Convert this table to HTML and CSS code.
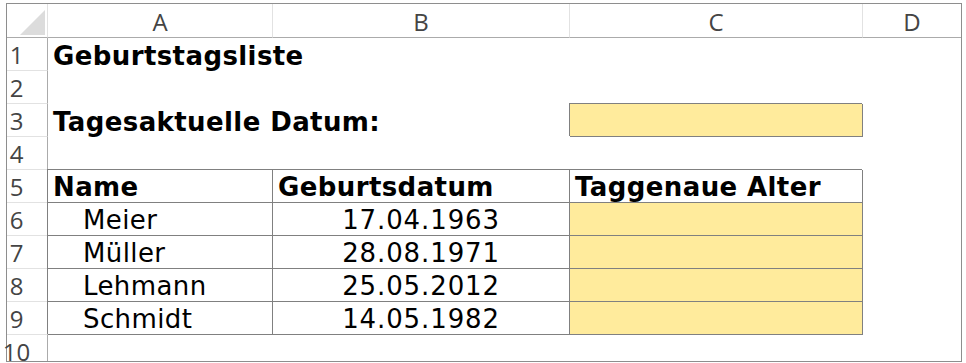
FILE: index.html
```html
<!DOCTYPE html>
<html lang="de">
  <head>
    <meta charset="UTF-8" />
    <meta name="viewport" content="width=device-width, initial-scale=1.0" />
    <title>Geburtstagsliste</title>
    <link rel="stylesheet" href="styles.css">
  </head>
  <body>
    <div class="sheet">
      <!-- column headers -->
      <div class="corner"><div class="corner-mark"></div></div>
      <div class="col-head">A</div>
      <div class="col-head">B</div>
      <div class="col-head">C</div>
      <div class="col-head">D</div>

      <div class="row-head"><span>1</span></div>
      <div class="cell bold">Geburtstagsliste</div>
      <div class="cell"></div>
      <div class="cell"></div>
      <div class="cell"></div>

      <div class="row-head"><span>2</span></div>
      <div class="cell"></div>
      <div class="cell"></div>
      <div class="cell"></div>
      <div class="cell"></div>

      <div class="row-head"><span>3</span></div>
      <div class="cell bold">Tagesaktuelle Datum:</div>
      <div class="cell"></div>
      <div class="cell boxed fill"></div>
      <div class="cell"></div>

      <div class="row-head"><span>4</span></div>
      <div class="cell"></div>
      <div class="cell"></div>
      <div class="cell"></div>
      <div class="cell"></div>

      <div class="row-head"><span>5</span></div>
      <div class="cell boxed bold">Name</div>
      <div class="cell boxed bold">Geburtsdatum</div>
      <div class="cell boxed bold">Taggenaue Alter</div>
      <div class="cell"></div>

      <div class="row-head"><span>6</span></div>
      <div class="cell boxed indent">Meier</div>
      <div class="cell boxed date">17.04.1963</div>
      <div class="cell boxed fill"></div>
      <div class="cell"></div>

      <div class="row-head"><span>7</span></div>
      <div class="cell boxed indent">Müller</div>
      <div class="cell boxed date">28.08.1971</div>
      <div class="cell boxed fill"></div>
      <div class="cell"></div>

      <div class="row-head"><span>8</span></div>
      <div class="cell boxed indent">Lehmann</div>
      <div class="cell boxed date">25.05.2012</div>
      <div class="cell boxed fill"></div>
      <div class="cell"></div>

      <div class="row-head"><span>9</span></div>
      <div class="cell boxed indent">Schmidt</div>
      <div class="cell boxed date">14.05.1982</div>
      <div class="cell boxed fill"></div>
      <div class="cell"></div>

      <div class="row-head"><span>10</span></div>
      <div class="cell"></div>
      <div class="cell"></div>
      <div class="cell"></div>
      <div class="cell"></div>
    </div>
  </body>
</html>
```

FILE: styles.css
```css
html,
body {
  margin: 0;
  background: #fff;
}

body {
  padding: 3px 0 0 6px;
}

/* every cell owns the line on its right and bottom edge */
.sheet {
  display: grid;
  grid-template-columns: 41px 225px 297px 293px 98px;
  grid-template-rows: 34px repeat(10, 33px);
  width: 954px;
  height: 357px;
  border: 1px solid #8e8e8e;
  overflow-x: visible;
  overflow-y: clip;
  font-family: "DejaVu Sans", Verdana, sans-serif;
  font-size: 26px;
  color: #000;
}

.sheet > div {
  box-sizing: border-box;
  display: flex;
  align-items: flex-end;
  white-space: nowrap;
  min-width: 0;
}

.corner {
  justify-content: flex-end;
  padding: 0 2px 2px 0;
  border-right: 1px solid #e2e2e2;
  border-bottom: 1px solid #ababab;
}

.corner-mark {
  width: 25px;
  height: 25px;
  background: #dcdcdc;
  clip-path: polygon(100% 0, 100% 100%, 0 100%);
}

.col-head {
  justify-content: center;
  padding-bottom: 3px;
  border-right: 1px solid #e2e2e2;
  border-bottom: 1px solid #ababab;
  font-family: "Open Sans", "Liberation Sans", sans-serif;
  font-size: 24px;
  line-height: 24px;
  color: #444;
}

.col-head:nth-child(5) {
  border-right: none;
}

.row-head {
  padding-bottom: 3px;
  border-right: 1px solid #ababab;
  border-bottom: 1px solid #e2e2e2;
  font-family: "Open Sans", "Liberation Sans", sans-serif;
  font-size: 24px;
  line-height: 24px;
  color: #444;
}

/* labels sit centred in the left half of the header column */
.row-head span {
  display: flex;
  justify-content: center;
  width: 19px;
}

.cell {
  padding-left: 5px;
  letter-spacing: 0.4px;
}

.bold {
  font-weight: bold;
}

.indent {
  padding-left: 35px;
}

.date {
  justify-content: flex-end;
  padding-right: 69px;
  letter-spacing: 0.9px;
}

.boxed {
  border-right: 1px solid #808080;
  border-bottom: 1px solid #808080;
  box-shadow: -1px -1px 0 #808080;
}

.fill {
  background: #ffeb9c;
}
```
